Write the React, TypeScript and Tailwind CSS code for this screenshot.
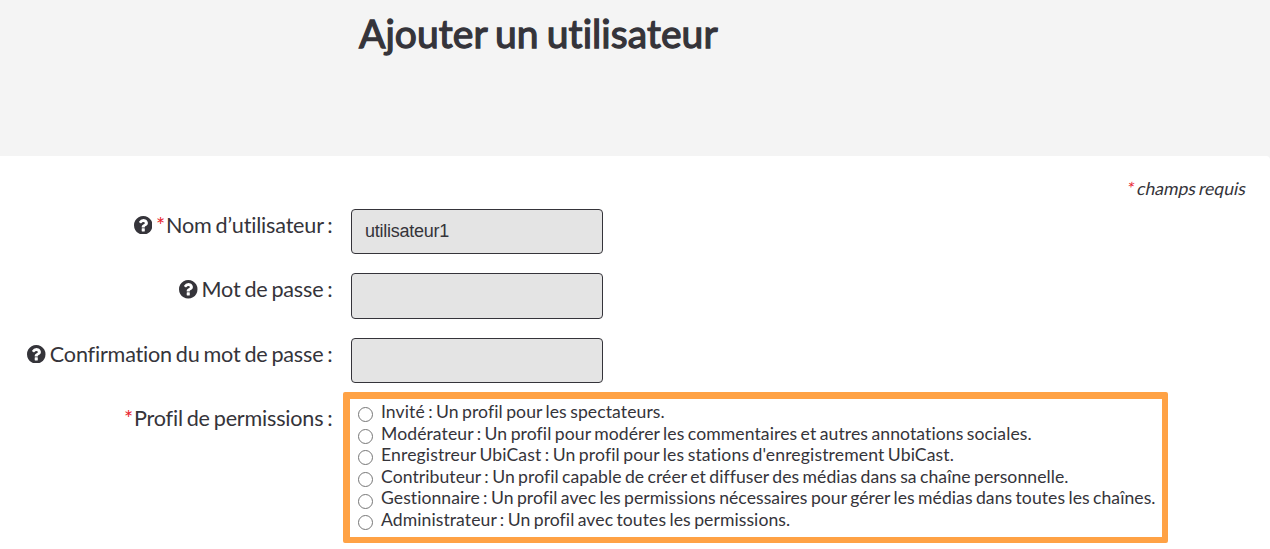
import type { ReactNode } from "react";

const profiles = [
  { text: "Invité : Un profil pour les spectateurs.", spacing: "tracking-[0.08px]" },
  {
    text: "Modérateur : Un profil pour modérer les commentaires et autres annotations sociales.",
    spacing: "tracking-[0.085px]",
  },
  { text: "Enregistreur UbiCast : Un profil pour les stations d'enregistrement UbiCast.", spacing: "tracking-[0.12px]" },
  {
    text: "Contributeur : Un profil capable de créer et diffuser des médias dans sa chaîne personnelle.",
    spacing: "tracking-[0.06px]",
  },
  {
    text: "Gestionnaire : Un profil avec les permissions nécessaires pour gérer les médias dans toutes les chaînes.",
    spacing: "tracking-[0.055px]",
  },
  { text: "Administrateur : Un profil avec toutes les permissions.", spacing: "tracking-[0.07px]" },
];

function HelpIcon() {
  return (
    <svg viewBox="128 128 1536 1536" fill="currentColor" className="mr-1 size-[18.5px]">
      <path d="M1024 1376v-192q0-14-9-23t-23-9h-192q-14 0-23 9t-9 23v192q0 14 9 23t23 9h192q14 0 23-9t9-23zm256-672q0-88-55.5-163t-138.5-116-170-41q-243 0-371 213-15 24 8 42l132 100q7 6 19 6 16 0 25-12 53-68 86-92 34-24 86-24 48 0 85.5 26t37.5 59q0 38-20 61t-68 45q-63 28-115.5 86.5t-52.5 125.5v36q0 14 9 23t23 9h192q14 0 23-9t9-23q0-19 21.5-49.5t54.5-49.5q32-18 49-28.5t46-35 44.5-48 28-60.5 12.5-81zm384 192q0 209-103 385.5t-279.5 279.5-385.5 103-385.5-103-279.5-279.5-103-385.5 103-385.5 279.5-279.5 385.5-103 385.5 103 279.5 279.5 103 385.5z" />
    </svg>
  );
}

function Label({ help, required, children }: { help?: boolean; required?: boolean; children: ReactNode }) {
  return (
    <div className="flex h-[32.4px] w-[332.5px] shrink-0 items-center justify-end whitespace-nowrap text-[21.6px] tracking-[-0.2px] [word-spacing:-1.4px]">
      {help && <HelpIcon />}
      {required && <span className="mr-px text-[#e8222e]">*</span>}
      <span>{children}</span>
    </div>
  );
}

function Field({ label, required, value = "" }: { label: string; required?: boolean; value?: string }) {
  return (
    <div className="flex h-[64.6px] items-start">
      <Label help required={required}>{label}</Label>
      <input
        defaultValue={value}
        className="ml-[18.5px] h-[45.2px] w-[252px] rounded-[4px] border border-[#35343a] bg-[#e4e4e4] px-[13px] font-['Liberation_Sans',sans-serif] text-[18px] tracking-[-0.25px] outline-none"
      />
    </div>
  );
}

export default function App() {
  return (
    <div className="h-[549px] overflow-hidden bg-[#f4f4f4] font-[Lato,sans-serif] text-[#35343a]">
      <header className="h-[156px] pl-[359px] pt-[10px]">
        <h1 className="text-[39px] font-normal leading-[47px] tracking-[0.08px] [-webkit-text-stroke:1.3px_#35343a] [word-spacing:-2px]">
          Ajouter un utilisateur
        </h1>
      </header>
      <main className="h-[393px] rounded-tr-[4px] bg-white">
        <p className="flex h-[52.8px] justify-end pr-[25px] pt-[21px] text-[17.6px] leading-6">
          <span className="-skew-x-12 [word-spacing:-1.5px]">
            <span className="text-[#e8222e]">*</span> champs requis
          </span>
        </p>
        <form>
          <Field label="Nom d’utilisateur :" required value="utilisateur1" />
          <Field label="Mot de passe :" />
          <Field label="Confirmation du mot de passe :" />
          <div className="-mt-[10.6px] flex items-start">
            <div className="pt-[10.4px]">
              <Label required>Profil de permissions :</Label>
            </div>
            <div className="ml-[10.5px] h-[151px] w-[825px] rounded-[2px] border-[6px] border-l-[7px] border-t-[7px] border-[#ffa245] pl-2 pt-[2px]">
              {profiles.map(({ text, spacing }) => (
                <label
                  key={text}
                  className="flex h-[21.6px] items-start whitespace-nowrap text-[17.6px] leading-[21.6px] [word-spacing:-1.2px]"
                >
                  <input type="radio" name="profile" className="mr-2 mt-[6.2px] size-[15px] shrink-0" />
                  <span className={spacing}>{text}</span>
                </label>
              ))}
            </div>
          </div>
        </form>
      </main>
    </div>
  );
}
